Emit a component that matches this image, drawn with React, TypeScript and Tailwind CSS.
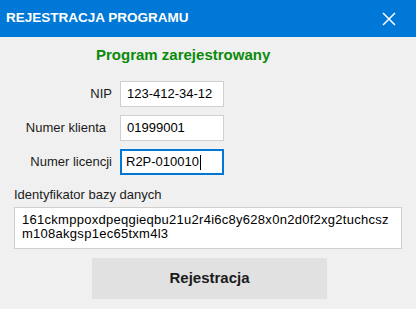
import React from 'react';

const font = { fontFamily: '"Liberation Sans", Arial, sans-serif' };

const Row: React.FC<{ label: string; value: string; labelPad?: string; focused?: boolean }> = ({ label, value, labelPad = '', focused }) => {
    return (
        <div className="flex items-center">
            <div className={`w-[112px] text-right text-[13px] text-[#1b1b1b] ${labelPad}`}>{label}</div>
            <div
                className={`ml-[8px] flex h-[26px] w-[104px] items-center bg-white text-[13px] text-black ${
                    focused ? 'border-2 border-[#0078d7] pl-[4px]' : 'border border-[#cfcfcf] pl-[6px]'
                }`}
            >
                <span>{value}</span>
                {focused && <span className="ml-[1px] h-[15px] w-[1px] bg-black" />}
            </div>
        </div>
    );
};

const App: React.FC = () => {
    return (
        <div className="h-[309px] w-[416px] overflow-hidden bg-[#f0f0f0]" style={font}>
            {/* Title bar */}
            <div className="flex h-[37px] items-center justify-between bg-[#0078d7] pl-[6px] pr-[20px]">
                <span className="text-[13.5px] font-bold text-white">REJESTRACJA PROGRAMU</span>
                <svg width="14" height="14" viewBox="0 0 14 14" className="text-white">
                    <path d="M1 1 L13 13 M13 1 L1 13" stroke="currentColor" strokeWidth="1.5" />
                </svg>
            </div>

            {/* Status */}
            <div className="mt-[9px] pl-[96px] text-[15px] font-bold leading-[18px] text-[#0a8a0a]">Program zarejestrowany</div>

            {/* Fields */}
            <div className="mt-[17px] flex flex-col gap-[8px]">
                <Row label="NIP" value="123-412-34-12" />
                <Row label="Numer klienta" value="01999001" labelPad="pr-[6px]" />
                <Row label="Numer licencji" value="R2P-010010" focused />
            </div>

            {/* Database id */}
            <div className="mt-[12px] pl-[14px] text-[13px] leading-[16px] text-[#1b1b1b]">Identyfikator bazy danych</div>
            <div className="mx-[14px] mt-[4px] h-[42px] border border-[#cfcfcf] bg-white pl-[7px] pr-[4px] pt-[5px] text-[13px] leading-[14px] tracking-[0.27px] text-black">
                <div>161ckmppoxdpeqgieqbu21u2r4i6c8y628x0n2d0f2xg2tuchcsz</div>
                <div>m108akgsp1ec65txm4l3</div>
            </div>

            {/* Button */}
            <div className="mt-[9px] flex pl-[92px]">
                <button className="h-[41px] w-[235px] bg-[#e1e1e1] text-[15px] font-bold text-[#1b1b1b]">Rejestracja</button>
            </div>
        </div>
    );
};

export default App;
